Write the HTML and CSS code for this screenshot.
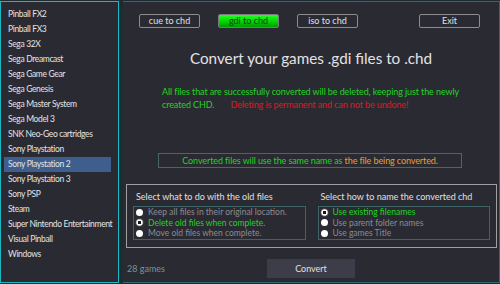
FILE: index.html
```html
<!DOCTYPE html>
<html lang="en">
<head>
    <meta charset="UTF-8">
    <title>CHD Converter</title>
    <link rel="stylesheet" href="styles.css">
</head>
<body>
    <div class="app">
        <ul class="systems">
            <li>Pinball FX2</li>
            <li>Pinball FX3</li>
            <li>Sega 32X</li>
            <li>Sega Dreamcast</li>
            <li>Sega Game Gear</li>
            <li>Sega Genesis</li>
            <li>Sega Master System</li>
            <li>Sega Model 3</li>
            <li>SNK Neo-Geo cartridges</li>
            <li>Sony Playstation</li>
            <li class="selected">Sony Playstation 2</li>
            <li>Sony Playstation 3</li>
            <li>Sony PSP</li>
            <li>Steam</li>
            <li>Super Nintendo Entertainment</li>
            <li>Visual Pinball</li>
            <li>Windows</li>
        </ul>

        <main class="panel">
            <div class="toolbar">
                <button class="btn">cue to chd</button>
                <button class="btn btn-active">gdi to chd</button>
                <button class="btn">iso to chd</button>
                <button class="btn btn-exit">Exit</button>
            </div>

            <h1>Convert your games .gdi files to .chd</h1>

            <p class="warning">
                All files that are successfully converted will be deleted, keeping just the newly<br>
                created CHD. <span class="danger">Deleting is permanent and can not be undone!</span>
            </p>

            <div class="naming-note">
                Converted files will use the same name as <span class="accent">the file being converted.</span>
            </div>

            <div class="options">
                <div class="option-group">
                    <div class="option-title">Select what to do with the old files</div>
                    <div class="radio-box">
                        <label class="radio"><span class="dot"></span>Keep all files in their original location.</label>
                        <label class="radio checked"><span class="dot"></span>Delete old files when complete.</label>
                        <label class="radio"><span class="dot"></span>Move old files when complete.</label>
                    </div>
                </div>
                <div class="option-group">
                    <div class="option-title">Select how to name the converted chd</div>
                    <div class="radio-box">
                        <label class="radio checked"><span class="dot"></span>Use existing filenames</label>
                        <label class="radio"><span class="dot"></span>Use parent folder names</label>
                        <label class="radio"><span class="dot"></span>Use games Title</label>
                    </div>
                </div>
            </div>

            <div class="footer">
                <span class="count">28 games</span>
                <button class="btn-convert">Convert</button>
            </div>
        </main>
    </div>
</body>
</html>
```

FILE: styles.css
```css
body {
    margin: 0;
    font-family: Lato, 'Noto Sans', sans-serif;
    font-size: 9px;
    background: #1c2c33;
    color: #dcdcdc;
    overflow: hidden;
}

.app {
    display: flex;
    height: 282px;
    margin-top: 1px;
}

/* System list */
.systems {
    list-style: none;
    margin: 0;
    padding: 5px 0 0 3px;
    width: 119px;
    background: #2a2a33;
    border: 1px solid #1cb8c2;
    box-sizing: border-box;
}

.systems li {
    height: 15px;
    line-height: 15px;
    padding-left: 4px;
    width: 107px;
    box-sizing: border-box;
    white-space: nowrap;
    font-size: 8.5px;
    letter-spacing: -0.35px;
    color: #e4e4e4;
}

.systems li.selected {
    background: #3e5e8e;
}

/* Main panel */
.panel {
    flex: 1;
    margin-left: 4px;
    background: #2a2a33;
    border: 1px solid #2c6a70;
    border-left: none;
    display: flex;
    flex-direction: column;
}

.toolbar {
    display: flex;
    gap: 18px;
    padding: 12px 19px 0 16px;
}

.btn {
    width: 61px;
    height: 14px;
    padding: 0;
    font-family: inherit;
    font-size: 9px;
    line-height: 12px;
    color: #e0e0e0;
    background: #2a2a33;
    border: 1px solid #8c8c8c;
    border-radius: 2px;
}

.btn-active {
    color: #0b3a0b;
    background: linear-gradient(to bottom, #22ff22 0%, #00d000 60%, #009900 100%);
    border-color: #7a7a7a;
}

.btn-exit {
    margin-left: auto;
}

h1 {
    margin: 20px 0 0;
    font-size: 15.25px;
    font-weight: normal;
    line-height: 20px;
    text-align: center;
    color: #e2e2e2;
}

.warning {
    margin: 17px 0 0 39px;
    line-height: 13px;
    letter-spacing: -0.1px;
    color: #22d422;
}

.danger {
    margin-left: 14px;
    color: #e01818;
}

.naming-note {
    margin: 42px 0 0 35px;
    width: 304px;
    height: 15px;
    box-sizing: border-box;
    border: 1px solid #4a6668;
    line-height: 13px;
    letter-spacing: -0.1px;
    text-align: center;
    color: #22d422;
}

.accent {
    color: #e8a030;
}

/* Option groups */
.options {
    display: flex;
    gap: 12px;
    margin: 16px 2px 0 3px;
    padding: 6px 6px 7px;
    border: 1px solid #a0a0a0;
}

.option-group {
    flex: 1;
}

.option-title {
    padding-left: 3px;
    line-height: 12px;
    color: #e0e0e0;
}

.radio-box {
    margin-top: 3px;
    padding: 0 0 0 2px;
    border: 1px solid #3f6466;
}

.radio {
    display: flex;
    align-items: center;
    gap: 5px;
    height: 10.5px;
    line-height: 10.5px;
    font-size: 8.5px;
    color: #8a8a90;
    white-space: nowrap;
}

.radio .dot {
    width: 7px;
    height: 7px;
    border-radius: 50%;
    background: #ffffff;
    box-sizing: border-box;
}

.radio.checked {
    color: #22d422;
}

.radio.checked .dot {
    border: 1.5px solid #ffffff;
    background: radial-gradient(circle, #1a1a1a 0 1.6px, #ffffff 1.8px);
    box-shadow: 0 0 0 0.5px #555;
}

/* Footer */
.footer {
    display: flex;
    align-items: center;
    margin-top: 11px;
    padding-left: 4px;
}

.count {
    width: 140px;
    color: #6f9898;
}

.btn-convert {
    width: 88px;
    height: 19px;
    padding: 0;
    font-family: inherit;
    font-size: 9px;
    color: #e0e0e0;
    background: #3c3d49;
    border: none;
}
```
